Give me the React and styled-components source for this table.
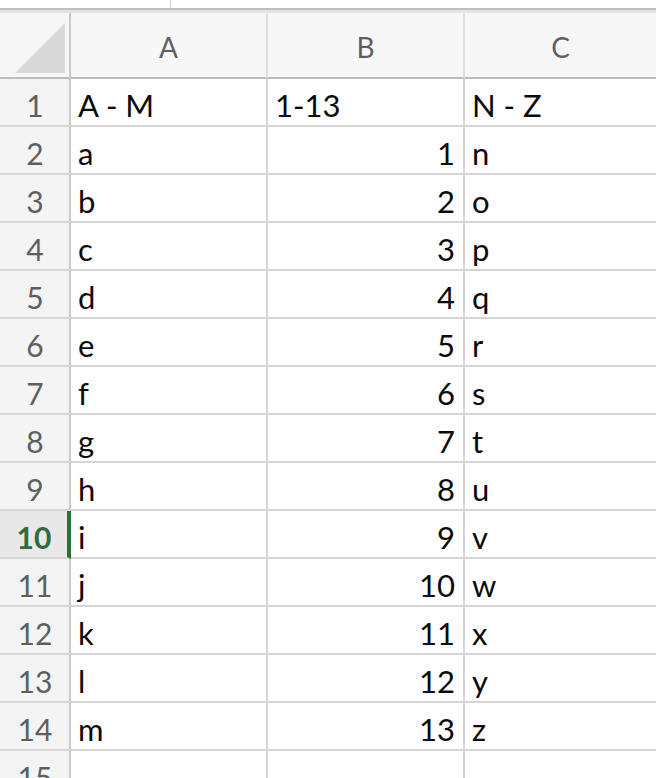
import React from "react";
import styled, { createGlobalStyle } from "styled-components";

// Page reset and base font
const GlobalStyle = createGlobalStyle`
  html, body {
    margin: 0;
    padding: 0;
    background: #ffffff;
    overflow: hidden;
  }
  body {
    font-family: Lato, "Open Sans", sans-serif;
  }
`;

const Page = styled.div`
  width: 656px;
  height: 778px;
  overflow: hidden;
  background: #ffffff;
`;

// Strip above the sheet (bottom edge of the formula bar)
const TopStrip = styled.div`
  display: flex;
  height: 8px;
  border-bottom: 2px solid #bfbfbf;
`;

const NameBox = styled.div`
  width: 170px;
  border-right: 1px solid #d2d2d2;
`;

const Sheet = styled.div`
  display: grid;
  grid-template-columns: 71px 197px 197px 1fr;
  grid-template-rows: 66px repeat(15, 48px);
  border-top: 3px solid #e3e3e3;
`;

const Corner = styled.div`
  background: #f6f6f6;
  border-right: 2px solid #c9c9c9;
  border-bottom: 2px solid #bcbcbc;
  display: flex;
  align-items: flex-end;
  justify-content: flex-end;
  padding: 0 4px 4px 0;
`;

const ColHeader = styled.div`
  box-sizing: border-box;
  background: #f7f7f7;
  border-right: ${(p) => (p.$last ? "none" : "2px solid #dedede")};
  border-bottom: 2px solid #bcbcbc;
  display: flex;
  align-items: center;
  justify-content: center;
  padding-top: 3px;
  font-size: 28px;
  color: #5f5f5f;
`;

const RowHeader = styled.div`
  box-sizing: border-box;
  background: ${(p) => (p.$active ? "#e8e8e8" : "#f4f4f4")};
  border-right: ${(p) => (p.$active ? "4px solid #2b6e3f" : "2px solid #c9c9c9")};
  border-bottom: 2px solid #d7d7d7;
  display: flex;
  align-items: flex-end;
  justify-content: center;
  padding: 0 0 2px ${(p) => (p.$active ? "1px" : "1px")};
  font-size: 30px;
  line-height: 36px;
  font-weight: ${(p) => (p.$active ? 700 : 400)};
  color: ${(p) => (p.$active ? "#2b6e3f" : "#5f5f5f")};
`;

const Cell = styled.div`
  box-sizing: border-box;
  border-right: ${(p) => (p.$last ? "none" : "2px solid #d5d5d5")};
  border-bottom: 2px solid #d5d5d5;
  display: flex;
  align-items: flex-end;
  justify-content: ${(p) => (p.$num ? "flex-end" : "flex-start")};
  padding: 0 8px 2px 7px;
  font-size: 31px;
  line-height: 36px;
  color: #0a0a0a;
  white-space: nowrap;
`;

const rows = [
  ["A - M", "1-13", "N - Z"],
  ["a", 1, "n"],
  ["b", 2, "o"],
  ["c", 3, "p"],
  ["d", 4, "q"],
  ["e", 5, "r"],
  ["f", 6, "s"],
  ["g", 7, "t"],
  ["h", 8, "u"],
  ["i", 9, "v"],
  ["j", 10, "w"],
  ["k", 11, "x"],
  ["l", 12, "y"],
  ["m", 13, "z"],
  ["", "", ""],
];

const ACTIVE_ROW = 10;

const App = () => {
  return (
    <Page>
      <GlobalStyle />
      <TopStrip>
        <NameBox />
      </TopStrip>
      <Sheet>
        <Corner>
          <svg width="50" height="50" viewBox="0 0 50 50">
            <polygon points="50,0 50,50 0,50" fill="#d9d9d9" />
          </svg>
        </Corner>
        <ColHeader>A</ColHeader>
        <ColHeader>B</ColHeader>
        <ColHeader $last>C</ColHeader>
        {rows.map((row, i) => {
          const n = i + 1;
          return (
            <React.Fragment key={n}>
              <RowHeader $active={n === ACTIVE_ROW}>{n}</RowHeader>
              <Cell>{row[0]}</Cell>
              <Cell $num={typeof row[1] === "number"}>{row[1]}</Cell>
              <Cell $last>{row[2]}</Cell>
            </React.Fragment>
          );
        })}
      </Sheet>
    </Page>
  );
};

export default App;
